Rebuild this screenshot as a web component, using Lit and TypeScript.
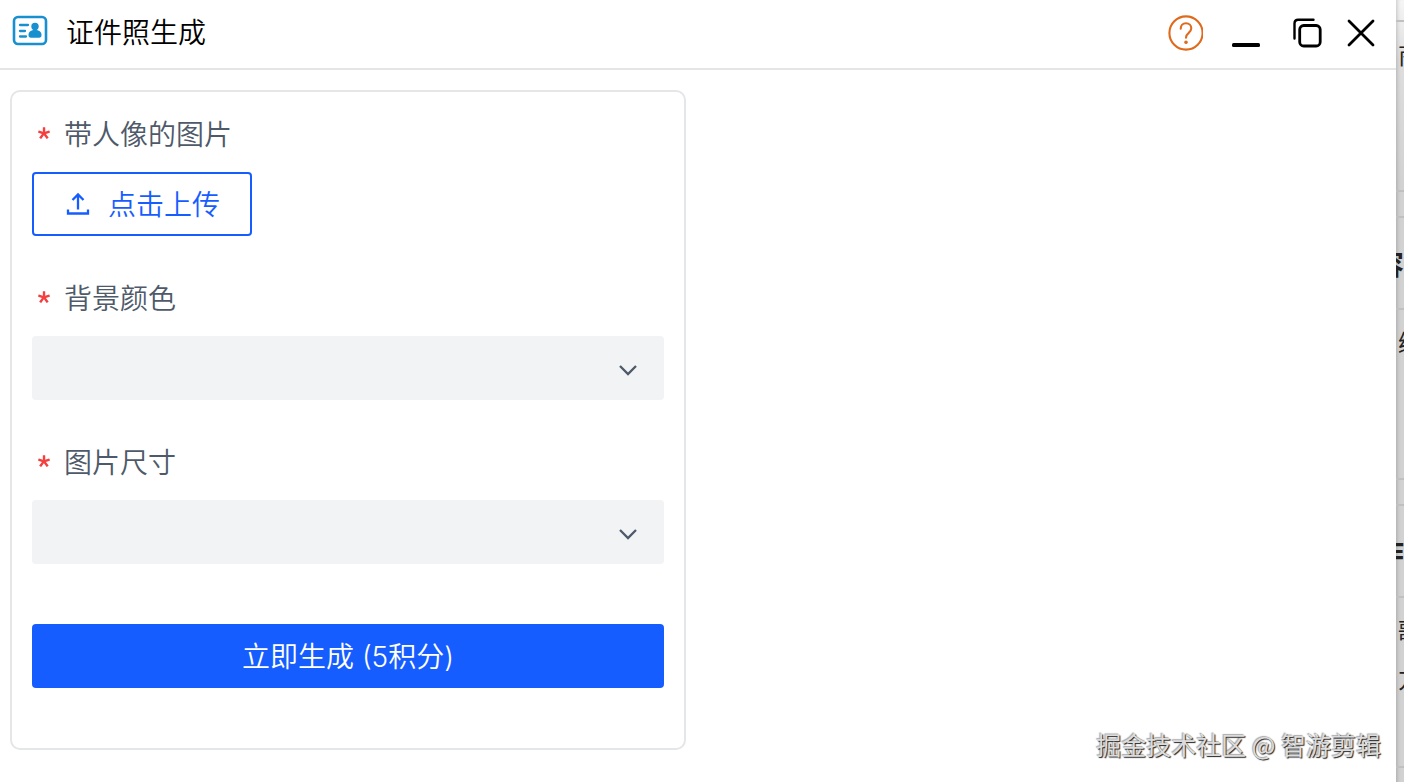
import { LitElement, html, css } from "lit";
import { customElement } from "lit/decorators.js";

@customElement("id-select")
class IdSelect extends LitElement {
  static properties = { label: {}, options: { attribute: false } };
  declare label: string;
  declare options: string[];

  static styles = css`
    :host {
      display: block;
    }
    .label {
      display: flex;
      align-items: center;
      height: 42px;
      padding-bottom: 2px;
      color: #4e5969;
      font-size: 28px;
      line-height: 42px;
    }
    .star {
      width: 12px;
      height: 12px;
      margin: 0 14px 0 6px;
      fill: #f53f3f;
    }
    .box {
      display: grid;
      align-items: center;
      margin-top: 16px;
      background: #f2f3f5;
      border-radius: 4px;
    }
    .select {
      grid-area: 1 / 1;
      appearance: none;
      width: 100%;
      height: 64px;
      padding: 0 64px 0 24px;
      border: 0;
      border-radius: 4px;
      background: transparent;
      color: #1d2129;
      font: inherit;
      font-size: 28px;
    }
    .arrow {
      grid-area: 1 / 1;
      justify-self: end;
      width: 24px;
      height: 24px;
      margin: 4px 24px 0 0;
      fill: none;
      stroke: #4e5969;
      stroke-width: 2.3;
      pointer-events: none;
    }
  `;

  render() {
    return html`
      <label class="label" for="field">
        <svg class="star" viewBox="0 0 1024 1024" aria-hidden="true">
          <path d="M583.338667 17.066667c18.773333 0 34.133333 15.36 34.133333 34.133333v349.013333l313.344-101.888a34.133333 34.133333 0 0 1 43.008 22.016l42.154667 129.706667a34.133333 34.133333 0 0 1-21.845334 43.178667l-315.733333 102.4 208.896 287.744a34.133333 34.133333 0 0 1-7.509333 47.786666l-110.421334 80.213334a34.133333 34.133333 0 0 1-47.786666-7.509334L505.685333 706.218667 288.426667 1005.226667a34.133333 34.133333 0 0 1-47.786667 7.509333l-110.421333-80.213333a34.133333 34.133333 0 0 1-7.509334-47.786667l214.186667-295.253333L29.013333 489.813333a34.133333 34.133333 0 0 1-22.016-43.008l42.154667-129.877333a34.133333 34.133333 0 0 1 43.008-22.016l320.512 104.106667L412.672 51.2c0-18.773333 15.36-34.133333 34.133333-34.133333h136.533334z"></path>
        </svg>
        ${this.label}
      </label>
      <div class="box">
        <select class="select" id="field" required>
          <option value="" selected></option>
          ${this.options.map((o) => html`<option>${o}</option>`)}
        </select>
        <svg class="arrow" viewBox="0 0 24 24" aria-hidden="true">
          <path d="M4 8l8 8 8-8"></path>
        </svg>
      </div>
    `;
  }
}

@customElement("app-root")
class AppRoot extends LitElement {
  static styles = css`
    :host {
      display: block;
      font-family: "Noto Sans CJK SC", sans-serif;
      font-weight: 350;
    }
    .screen {
      display: grid;
      grid-template-columns: minmax(0, 1fr) 8px;
      min-height: 100vh;
      background: #fff;
    }
    .window {
      display: flex;
      flex-direction: column;
      background: #fff;
    }
    .bar {
      display: flex;
      align-items: center;
      height: 68px;
      padding: 0 19px 0 12px;
      border-bottom: 2px solid #e5e5e5;
    }
    .logo {
      width: 36px;
      height: 32px;
      margin: 0 18px 6px 0;
    }
    .title {
      flex: 1;
      margin: 0;
      padding-bottom: 6px;
      font-size: 28px;
      line-height: 40px;
      font-weight: 350;
      color: #000;
    }
    .tool {
      display: flex;
      margin: 0;
      padding: 0;
      border: 0;
      background: none;
      cursor: pointer;
    }
    .tools {
      display: flex;
      align-items: center;
      gap: 24px;
      padding-bottom: 2px;
    }
    .body {
      flex: 1;
      display: grid;
      grid-template-columns: repeat(2, minmax(0, 1fr));
      align-items: start;
      gap: 24px;
      padding: 20px 10px;
    }
    .card {
      display: flex;
      flex-direction: column;
      gap: 40px;
      padding: 20px 20px 60px;
      border: 2px solid #e5e6e8;
      border-radius: 10px;
    }
    .label {
      display: flex;
      align-items: center;
      height: 42px;
      padding-bottom: 2px;
      color: #4e5969;
      font-size: 28px;
      line-height: 42px;
    }
    .star {
      width: 12px;
      height: 12px;
      margin: 0 14px 0 6px;
      fill: #f53f3f;
    }
    .upload {
      display: flex;
      align-items: center;
      gap: 16px;
      height: 64px;
      margin: 16px 0 0;
      padding: 0 30px 2px;
      border: 2px solid #165dff;
      border-radius: 4px;
      background: #fff;
      color: #165dff;
      font: inherit;
      font-size: 28px;
      cursor: pointer;
    }
    .submit {
      height: 64px;
      margin: 20px 0 0;
      padding: 0 0 2px;
      border: 0;
      border-radius: 4px;
      background: #165dff;
      color: #fff;
      font: inherit;
      font-family: Inter, "Noto Sans CJK SC", sans-serif;
      font-size: 28px;
      cursor: pointer;
    }
    .behind {
      display: flex;
      flex-direction: column;
      overflow: hidden;
      padding-top: 20px;
      background: linear-gradient(to bottom, #f6f6f6, #dedede 60px, #d2d2d2 180px);
      box-shadow: inset 4px 0 4px -3px #0003;
      color: #222;
      font-size: 24px;
      font-weight: 400;
      line-height: 48px;
      white-space: nowrap;
    }
    .pane {
      height: 168px;
      border-top: 2px solid #c0c0c0;
    }
    .gap {
      height: 24px;
      border-top: 2px solid #c0c0c0;
    }
    .head {
      display: flex;
      justify-content: flex-end;
      height: 90px;
      border-top: 2px solid #c0c0c0;
      font-size: 28px;
      font-weight: 700;
      line-height: 90px;
    }
    .line {
      padding: 8px 0 0 2px;
    }
    .line + .line {
      padding-top: 0;
    }
    .mark {
      position: absolute;
      right: 23px;
      bottom: 20px;
      color: #dcdcdc;
      font-size: 25px;
      font-weight: 400;
      line-height: 36px;
      text-shadow: 1px 1px 1px #222, -1px -1px 1px #aaa;
    }
  `;

  render() {
    return html`
      <div class="screen">
        <main class="window">
          <header class="bar">
            <svg class="logo" viewBox="0 0 36 32" aria-hidden="true">
              <rect x="2" y="2" width="32" height="27" rx="4" fill="none" stroke="#1890cf" stroke-width="2.6"></rect>
              <path d="M8 10h8M8 16h5M8 21.500h6" fill="none" stroke="#1890cf" stroke-width="2.300" stroke-linecap="round"></path>
              <circle cx="23" cy="11.500" r="3.700" fill="#1890cf"></circle>
              <path d="M16.500 20c0-3.500 2.500-5 6.500-5s6.500 1.500 6.500 5c0 1.800-.8 2.700-2.500 2.700h-8c-1.700 0-2.500-.9-2.500-2.700z" fill="#1890cf"></path>
            </svg>
            <h1 class="title">证件照生成</h1>
            <div class="tools">
              <button class="tool" aria-label="帮助">
                <svg width="36" height="36" viewBox="0 0 36 36" fill="none" stroke="#df6a1c" stroke-width="2.100" stroke-linecap="round">
                  <circle cx="19" cy="18" r="16.600"></circle>
                  <path d="M13.700 13.800c0-3.300 2.200-5.500 5.300-5.500s5.300 2.200 5.300 5c0 2.300-1.300 3.500-2.800 4.800-1.700 1.400-2.500 2.300-2.500 4.600"></path>
                  <circle cx="19" cy="27.200" r="1.200" fill="#df6a1c" stroke-width="1.200"></circle>
                </svg>
              </button>
              <button class="tool" aria-label="最小化">
                <svg width="36" height="36" viewBox="0 0 36 36">
                  <rect x="5" y="28" width="28" height="4" rx="1.500"></rect>
                </svg>
              </button>
              <button class="tool" aria-label="还原">
                <svg width="36" height="36" viewBox="0 0 36 36" fill="none" stroke="#000" stroke-width="2.800" stroke-linecap="round" stroke-linejoin="round">
                  <rect x="12.700" y="10.500" width="20.500" height="20.500" rx="4"></rect>
                  <path d="M7.500 23.500V8.500Q7.500 4.800 11.200 4.800H26.500" stroke-width="2.400"></path>
                </svg>
              </button>
              <button class="tool" aria-label="关闭">
                <svg width="30" height="36" viewBox="0 0 30 36" fill="none" stroke="#000" stroke-width="2.800" stroke-linecap="round">
                  <path d="M2 6l24 24M26 6L2 30"></path>
                </svg>
              </button>
            </div>
          </header>
          <div class="body">
            <form class="card" @submit=${(e: Event) => e.preventDefault()}>
              <div>
                <label class="label" for="upload">
                  <svg class="star" viewBox="0 0 1024 1024" aria-hidden="true">
                    <path d="M583.338667 17.066667c18.773333 0 34.133333 15.36 34.133333 34.133333v349.013333l313.344-101.888a34.133333 34.133333 0 0 1 43.008 22.016l42.154667 129.706667a34.133333 34.133333 0 0 1-21.845334 43.178667l-315.733333 102.4 208.896 287.744a34.133333 34.133333 0 0 1-7.509333 47.786666l-110.421334 80.213334a34.133333 34.133333 0 0 1-47.786666-7.509334L505.685333 706.218667 288.426667 1005.226667a34.133333 34.133333 0 0 1-47.786667 7.509333l-110.421333-80.213333a34.133333 34.133333 0 0 1-7.509334-47.786667l214.186667-295.253333L29.013333 489.813333a34.133333 34.133333 0 0 1-22.016-43.008l42.154667-129.877333a34.133333 34.133333 0 0 1 43.008-22.016l320.512 104.106667L412.672 51.2c0-18.773333 15.36-34.133333 34.133333-34.133333h136.533334z"></path>
                  </svg>
                  带人像的图片
                </label>
                <button class="upload" id="upload" type="button">
                  <svg width="28" height="28" viewBox="0 0 28 28" fill="none" stroke="#165dff" stroke-width="2.300" aria-hidden="true">
                    <path d="M14 20.500V5.500M8.500 11L14 5.500l5.500 5.500M4 20.500v4h20v-4"></path>
                  </svg>
                  点击上传
                </button>
              </div>
              <id-select .label=${"背景颜色"} .options=${["白色", "蓝色", "红色"]}></id-select>
              <id-select .label=${"图片尺寸"} .options=${["一寸", "二寸"]}></id-select>
              <button class="submit" type="submit">立即生成 (5积分)</button>
            </form>
          </div>
        </main>
        <aside class="behind" aria-hidden="true">
          <div class="pane"><div class="line">商</div></div>
          <div class="gap"></div>
          <div class="head">容</div>
          <div class="pane"><div class="line">编</div></div>
          <div class="gap"></div>
          <div class="head">作</div>
          <div class="pane"><div class="line">歌</div><div class="line">方</div></div>
          <div class="gap"></div>
        </aside>
        <div class="mark">掘金技术社区 @ 智游剪辑</div>
      </div>
    `;
  }
}
